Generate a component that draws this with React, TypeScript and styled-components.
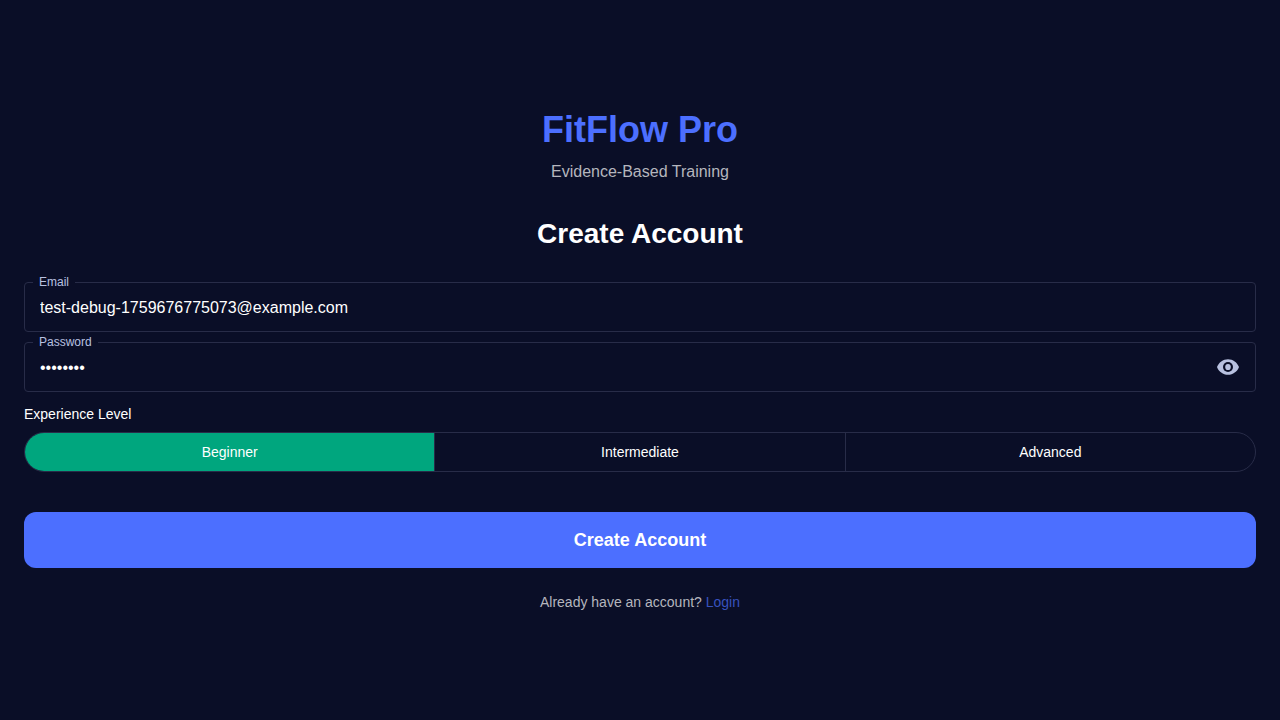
import React, { useState } from 'react';
import styled, { createGlobalStyle } from 'styled-components';
import { MdVisibilityOff } from 'react-icons/md';

const colors = {
  background: '#0a0e27',
  primary: '#4c6fff',
  link: '#3852be',
  success: '#00a67e',
  outline: '#282c48',
  label: '#b8c1e0',
  muted: '#b5b6be',
  text: '#ffffff',
};

const GlobalStyle = createGlobalStyle`
  *, *::before, *::after {
    box-sizing: border-box;
  }
  body {
    margin: 0;
    background: ${colors.background};
    color: ${colors.text};
    font-family: "Liberation Sans", Arial, sans-serif;
  }
  button, input {
    font-family: inherit;
  }
`;

const Page = styled.main`
  min-height: 100vh;
  display: flex;
  flex-direction: column;
  justify-content: center;
  padding: 24px;
`;

const Header = styled.header`
  display: flex;
  flex-direction: column;
  gap: 8px;
  margin-bottom: 32px;
  text-align: center;
`;

const Brand = styled.h1`
  margin: 0;
  color: ${colors.primary};
  font-size: 36px;
  line-height: 44px;
  font-weight: 700;
`;

const Tagline = styled.p`
  margin: 0;
  color: ${colors.muted};
  font-size: 16px;
  line-height: 24px;
`;

const Form = styled.form`
  display: flex;
  flex-direction: column;
`;

const FormTitle = styled.h2`
  margin: 0 0 30px;
  font-size: 28px;
  line-height: 36px;
  font-weight: 700;
  text-align: center;
`;

const Fields = styled.div`
  display: flex;
  flex-direction: column;
  gap: 10px;
  margin-bottom: 12px;
`;

const Field = styled.div`
  position: relative;
  display: flex;
  align-items: center;
  height: 50px;
  padding: 0 15px;
  border: 1px solid ${colors.outline};
  border-radius: 4px;
`;

const FieldLabel = styled.label`
  position: absolute;
  top: -9px;
  left: 8px;
  padding: 0 6px;
  background: ${colors.background};
  color: ${colors.label};
  font-size: 12px;
  line-height: 16px;
`;

const TextInput = styled.input`
  flex: 1;
  min-width: 0;
  height: 48px;
  padding: 2px 0 0;
  border: 0;
  outline: 0;
  background: transparent;
  color: ${colors.text};
  font-size: 16px;
`;

const IconButton = styled.button`
  display: flex;
  padding: 0;
  border: 0;
  background: transparent;
  color: ${colors.label};
  cursor: pointer;
`;

const GroupLabel = styled.span`
  margin-bottom: 8px;
  font-size: 14px;
  line-height: 20px;
`;

const Segments = styled.div`
  display: flex;
  height: 40px;
  margin-bottom: 40px;
  overflow: hidden;
  border: 1px solid ${colors.outline};
  border-radius: 20px;
`;

const Segment = styled.label<{ $selected: boolean }>`
  position: relative;
  flex: 1;
  display: flex;
  align-items: center;
  justify-content: center;
  background: ${({ $selected }) => ($selected ? colors.success : 'transparent')};
  font-size: 14px;
  line-height: 20px;
  cursor: pointer;

  &:first-child {
    border-right: 1px solid ${colors.outline};
  }
  &:last-child {
    border-left: 1px solid ${colors.outline};
  }
`;

const SegmentRadio = styled.input`
  position: absolute;
  inset: 0;
  margin: 0;
  opacity: 0;
  cursor: pointer;
`;

const SubmitButton = styled.button`
  height: 56px;
  margin-bottom: 24px;
  border: 0;
  border-radius: 12px;
  background: ${colors.primary};
  color: ${colors.text};
  font-size: 18px;
  font-weight: 700;
  cursor: pointer;
`;

const Footer = styled.p`
  margin: 0;
  color: ${colors.muted};
  font-size: 14px;
  line-height: 20px;
  text-align: center;
`;

const LoginLink = styled.a`
  color: ${colors.link};
  text-decoration: none;
`;

function EyeIcon() {
  return (
    <svg width="24" height="24" viewBox="0 0 24 24" aria-hidden="true">
      <path
        fill="currentColor"
        d="M12 4.2C7 4.2 2.73 7.4 1 12c1.73 4.6 6 7.8 11 7.8s9.27-3.2 11-7.8c-1.73-4.6-6-7.8-11-7.8z"
      />
      <circle cx="12" cy="12" r="5" fill={colors.background} />
      <ellipse cx="12" cy="12" rx="2.8" ry="3.1" fill="currentColor" />
    </svg>
  );
}

const levels = ['Beginner', 'Intermediate', 'Advanced'];

export default function App() {
  const [email, setEmail] = useState('test-debug-1759676775073@example.com');
  const [password, setPassword] = useState('password');
  const [visible, setVisible] = useState(false);
  const [level, setLevel] = useState('Beginner');

  return (
    <>
      <GlobalStyle />
      <Page>
        <Header>
          <Brand>FitFlow Pro</Brand>
          <Tagline>Evidence-Based Training</Tagline>
        </Header>
        <Form onSubmit={(event) => event.preventDefault()}>
          <FormTitle>Create Account</FormTitle>
          <Fields>
            <Field>
              <FieldLabel htmlFor="email">Email</FieldLabel>
              <TextInput
                id="email"
                type="email"
                value={email}
                onChange={(event) => setEmail(event.target.value)}
              />
            </Field>
            <Field>
              <FieldLabel htmlFor="password">Password</FieldLabel>
              <TextInput
                id="password"
                type={visible ? 'text' : 'password'}
                value={password}
                onChange={(event) => setPassword(event.target.value)}
              />
              <IconButton
                type="button"
                aria-label={visible ? 'Hide password' : 'Show password'}
                onClick={() => setVisible(!visible)}
              >
                {visible ? <MdVisibilityOff size={24} /> : <EyeIcon />}
              </IconButton>
            </Field>
          </Fields>
          <GroupLabel id="level-label">Experience Level</GroupLabel>
          <Segments role="radiogroup" aria-labelledby="level-label">
            {levels.map((name) => (
              <Segment key={name} $selected={name === level}>
                <SegmentRadio
                  type="radio"
                  name="level"
                  value={name}
                  checked={name === level}
                  onChange={() => setLevel(name)}
                />
                {name}
              </Segment>
            ))}
          </Segments>
          <SubmitButton type="submit">Create Account</SubmitButton>
        </Form>
        <Footer>
          Already have an account? <LoginLink href="#login">Login</LoginLink>
        </Footer>
      </Page>
    </>
  );
}
